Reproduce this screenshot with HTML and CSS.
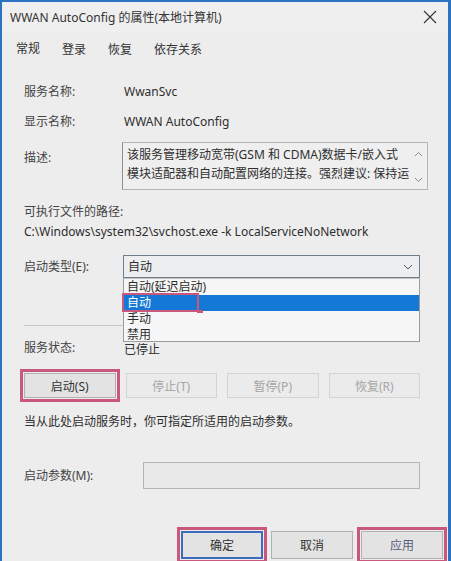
FILE: index.html
```html
<!DOCTYPE html>
<html lang="zh-CN">
<head>
    <meta charset="UTF-8">
    <title>WWAN AutoConfig 的属性(本地计算机)</title>
    <link rel="stylesheet" href="styles.css">
</head>
<body>
    <div class="window">
        <div class="titlebar">
            <span class="title">WWAN AutoConfig 的属性(本地计算机)</span>
            <svg class="close" width="14" height="14" viewBox="0 0 14 14">
                <path d="M1 1 L13 13 M13 1 L1 13" stroke="#333" stroke-width="1.1" fill="none"/>
            </svg>
        </div>

        <div class="tabs">
            <span class="tab active">常规</span>
            <span class="tab">登录</span>
            <span class="tab">恢复</span>
            <span class="tab">依存关系</span>
        </div>

        <div class="panel">
            <div class="row first">
                <span class="label">服务名称:</span>
                <span class="value">WwanSvc</span>
            </div>
            <div class="row second">
                <span class="label">显示名称:</span>
                <span class="value">WWAN AutoConfig</span>
            </div>

            <div class="row desc-row">
                <span class="label desc-label">描述:</span>
                <div class="desc-box">
                    <div class="desc-text">
                        <div>该服务管理移动宽带(GSM 和 CDMA)数据卡/嵌入式</div>
                        <div>模块适配器和自动配置网络的连接。强烈建议: 保持运</div>
                    </div>
                    <div class="scroll">
                        <svg width="9" height="6" viewBox="0 0 9 6"><path d="M1 5 L4.5 1.5 L8 5" stroke="#888" fill="none"/></svg>
                        <svg width="9" height="6" viewBox="0 0 9 6"><path d="M1 1 L4.5 4.5 L8 1" stroke="#888" fill="none"/></svg>
                    </div>
                </div>
            </div>

            <div class="line exe-label">可执行文件的路径:</div>
            <div class="line path">C:\Windows\system32\svchost.exe -k LocalServiceNoNetwork</div>

            <div class="row startup-row">
                <span class="label startup-label">启动类型(E):</span>
                <div class="combo">
                    <span>自动</span>
                    <svg width="10" height="6" viewBox="0 0 10 6"><path d="M1 1 L5 5 L9 1" stroke="#555" fill="none"/></svg>
                    <!-- 展开的下拉列表 -->
                    <div class="dropdown">
                        <div class="item">自动(延迟启动)</div>
                        <div class="item selected">自动<span class="mark"></span><span class="mark-tail"></span></div>
                        <div class="item">手动</div>
                        <div class="item">禁用</div>
                    </div>
                </div>
            </div>

            <div class="separator"></div>

            <div class="row status-row">
                <span class="label">服务状态:</span>
                <span class="value status-value">已停止</span>
            </div>

            <div class="btn-row">
                <button class="btn marked">启动(S)</button>
                <button class="btn" disabled>停止(T)</button>
                <button class="btn" disabled>暂停(P)</button>
                <button class="btn" disabled>恢复(R)</button>
            </div>

            <div class="line hint">当从此处启动服务时，你可指定所适用的启动参数。</div>

            <div class="row param-row">
                <span class="label param-label">启动参数(M):</span>
                <div class="param-input"></div>
            </div>
        </div>

        <div class="footer">
            <button class="btn dlg marked focused">确定</button>
            <button class="btn dlg">取消</button>
            <button class="btn dlg marked apply">应用</button>
        </div>
    </div>
</body>
</html>
```

FILE: styles.css
```css
* {
    box-sizing: border-box;
}
body {
    margin: 0;
    background: #ededed;
    font-family: "Noto Sans", "Noto Sans CJK SC", sans-serif;
    font-size: 12px;
    color: #2e2e2e;
}
.window {
    width: 451px;
    height: 561px;
    overflow: hidden;
    background: #ededed;
    border-top: 2px solid #2b72c0;
    border-left: 2px solid #2b72c0;
    border-right: 3px solid #2b72c0;
}
.titlebar {
    height: 30px;
    display: flex;
    align-items: center;
    justify-content: space-between;
    padding: 0 11px 0 8px;
    background: #efefef;
}
.title {
    font-size: 12px;
    color: #333;
}
.tabs {
    height: 36px;
    display: flex;
    align-items: center;
    gap: 22px;
    padding-left: 14px;
}
.tab {
    line-height: 16px;
    color: #333;
}
.tab.active {
    margin-top: -3px;
}
.panel {
    padding: 16px 28px 0 22px;
}
.row {
    display: flex;
    line-height: 16px;
}
.label {
    width: 100px;
    flex-shrink: 0;
    color: #444;
}
.second {
    margin-top: 14px;
}
.desc-row {
    margin-top: 12px;
}
.desc-label {
    width: 98px;
    padding-top: 8px;
}
.desc-box {
    flex: 1;
    height: 48px;
    display: flex;
    border: 1px solid #b4b4b4;
    border-left-color: #8f8f8f;
    background: #efefef;
}
.desc-text {
    flex: 1;
    padding: 2px 0 0 4px;
    line-height: 19px;
    white-space: nowrap;
    overflow: hidden;
}
.scroll {
    width: 18px;
    display: flex;
    flex-direction: column;
    justify-content: space-between;
    align-items: center;
    padding: 8px 0 6px;
}
.line {
    line-height: 16px;
}
.exe-label {
    margin-top: 14px;
    color: #444;
}
.path {
    margin-top: 4px;
}
.startup-row {
    margin-top: 15px;
    align-items: center;
}
.startup-label {
    width: 99px;
}
.combo {
    position: relative;
    flex: 1;
    height: 23px;
    display: flex;
    align-items: center;
    justify-content: space-between;
    padding: 0 6px 0 4px;
    border: 1px solid #6f7e89;
    background: #eceef0;
}
.dropdown {
    position: absolute;
    top: 22px;
    left: -1px;
    right: -1px;
    height: 64px;
    background: #f6f6f6;
    border: 1px solid #9c9c9c;
    border-top-color: #c4c4c4;
    z-index: 2;
}
.item {
    position: relative;
    height: 16px;
    line-height: 16px;
    padding-left: 3px;
}
.item.selected {
    background: #1479d6;
    color: #fff;
}
.mark {
    position: absolute;
    left: -2px;
    top: -2px;
    width: 77px;
    height: 19px;
    border: 2px solid #c9587c;
}
.mark-tail {
    position: absolute;
    left: 73px;
    top: 15px;
    width: 6px;
    height: 3px;
    background: #c9587c;
}
.separator {
    margin-top: 47px;
    height: 1px;
    background: #c6c6c6;
}
.status-row {
    margin-top: 14px;
}
.status-value {
    margin-top: 2px;
}
.btn-row {
    margin-top: 15px;
    display: grid;
    grid-template-columns: repeat(4, 1fr);
    gap: 10px;
}
.btn {
    height: 25px;
    font-family: inherit;
    font-size: 12px;
    color: #333;
    background: #e3e3e3;
    border: 1px solid #b0b0b0;
    padding: 0;
}
.btn:disabled {
    color: #a6a6a6;
    background: #ebebeb;
    border-color: #d4d4d4;
}
.btn.marked {
    outline: 3px solid #c9587c;
    outline-offset: 1px;
}
.hint {
    margin-top: 16px;
}
.param-row {
    margin-top: 32px;
    align-items: center;
}
.param-label {
    width: 119px;
}
.param-input {
    flex: 1;
    height: 27px;
    border: 1px solid #b4b4b4;
    background: #e9e9e9;
}
.footer {
    margin-top: 42px;
    display: flex;
    justify-content: flex-end;
    gap: 8px;
    padding-right: 5px;
}
.btn.dlg {
    width: 82px;
    height: 28px;
}
.btn.focused {
    border: 2px solid #3a6cb8;
}
.btn.apply {
    color: #585c7c;
}
```
